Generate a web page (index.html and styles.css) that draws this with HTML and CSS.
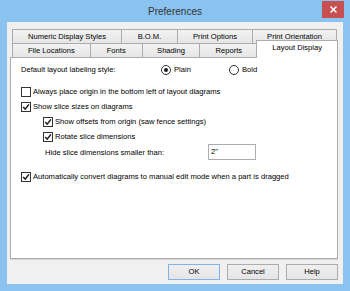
FILE: index.html
```html
<!DOCTYPE html>
<html>
<head>
<meta charset="utf-8">
<link rel="stylesheet" href="styles.css">
</head>
<body>
<div class="window">
  <div class="titlebar">
    <div class="title">Preferences</div>
    <div class="close"><svg width="7" height="7" viewBox="0 0 7 7"><path d="M0.5 0.5 L6.5 6.5 M6.5 0.5 L0.5 6.5" stroke="#fff" stroke-width="1.5"/></svg></div>
  </div>
  <div class="client">
    <div class="tabs">
      <div class="tabrow back">
        <div class="tab w-numeric">Numeric Display Styles</div>
        <div class="tab w-bom">B.O.M.</div>
        <div class="tab w-print">Print Options</div>
        <div class="tab w-orient">Print Orientation</div>
      </div>
      <div class="tabrow front">
        <div class="tab w-file">File Locations</div>
        <div class="tab w-fonts">Fonts</div>
        <div class="tab w-shading">Shading</div>
        <div class="tab w-reports">Reports</div>
        <div class="tab selected">Layout Display</div>
      </div>
    </div>
    <div class="panel">
      <div class="row">
        <span class="label-default">Default layout labeling style:</span>
        <span class="radio-opt plain"><span class="radio checked"></span>Plain</span>
        <span class="radio-opt"><span class="radio"></span>Bold</span>
      </div>
      <div class="row gap-after-default"><span class="cb"></span>Always place origin in the bottom left of layout diagrams</div>
      <div class="row"><span class="cb"><svg width="8" height="8" viewBox="0 0 8 8"><path d="M1.2 4 L3.2 6.2 L6.9 1.4" fill="none" stroke="#1a1a1a" stroke-width="1.5"/></svg></span>Show slice sizes on diagrams</div>
      <div class="row indent"><span class="cb"><svg width="8" height="8" viewBox="0 0 8 8"><path d="M1.2 4 L3.2 6.2 L6.9 1.4" fill="none" stroke="#1a1a1a" stroke-width="1.5"/></svg></span>Show offsets from origin (saw fence settings)</div>
      <div class="row indent"><span class="cb"><svg width="8" height="8" viewBox="0 0 8 8"><path d="M1.2 4 L3.2 6.2 L6.9 1.4" fill="none" stroke="#1a1a1a" stroke-width="1.5"/></svg></span>Rotate slice dimensions</div>
      <div class="row hide-row"><span class="label-hide">Hide slice dimensions smaller than:</span><span class="textbox">2"</span></div>
      <div class="row gap-before-auto"><span class="cb"><svg width="8" height="8" viewBox="0 0 8 8"><path d="M1.2 4 L3.2 6.2 L6.9 1.4" fill="none" stroke="#1a1a1a" stroke-width="1.5"/></svg></span>Automatically convert diagrams to manual edit mode when a part is dragged</div>
    </div>
    <div class="footer">
      <div class="btn default">OK</div>
      <div class="btn">Cancel</div>
      <div class="btn">Help</div>
    </div>
  </div>
</div>
</body>
</html>
```
FILE: styles.css
```css
html, body {
  margin: 0;
  padding: 0;
}
body {
  width: 350px;
  height: 291px;
  overflow: hidden;
  background: #8ac3f0;
  font-family: "Liberation Sans", Arial, sans-serif;
  font-size: 7.6px;
  color: #000;
}
.window {
  box-sizing: border-box;
  height: 291px;
  padding: 0 7px 7px;
  display: flex;
  flex-direction: column;
}
.titlebar {
  height: 22px;
  display: grid;
  grid-template-columns: 1fr auto 1fr;
  align-items: start;
}
.title {
  grid-column: 2;
  font-size: 10px;
  line-height: 23px;
  color: #333;
}
.close {
  grid-column: 3;
  justify-self: end;
  width: 22px;
  height: 17px;
  margin-top: 1px;
  margin-right: -1px;
  background: #c75050;
  display: flex;
  align-items: center;
  justify-content: center;
}
.close svg { display: block; }
.client {
  flex: 1;
  background: #f0f0f0;
  display: flex;
  flex-direction: column;
  padding: 7px 5px 4px 3px;
  min-height: 0;
}
.tabs {
  height: 28px;
  margin-left: 2px;
}
.tabrow {
  display: flex;
}
.tabrow.back {
  height: 15px;
}
.tabrow.front {
  height: 14px;
  margin-top: -1px;
}
.tab {
  box-sizing: border-box;
  border: 1px solid #acacac;
  background: linear-gradient(#f2f2f2, #e6e6e6);
  text-align: center;
  line-height: 13px;
  color: #000;
  white-space: nowrap;
}
.tab + .tab { margin-left: -1px; }
.front .tab {
  border-bottom: none;
  line-height: 14px;
}
.w-numeric { width: 110px; }
.w-bom { width: 57px; }
.w-print { width: 76px; }
.w-orient { width: 85px; }
.w-file { width: 79px; }
.w-fonts { width: 53px; }
.w-shading { width: 59px; }
.w-reports { width: 59px; }
.front .tab.selected {
  position: relative;
  z-index: 1;
  width: 82px;
  height: 18px;
  margin-top: -3px;
  margin-left: -2px;
  background: #fff;
  line-height: 14px;
}
.panel {
  flex: 1;
  background: #fff;
  border: 1px solid #adadad;
  box-shadow: 0 1px 0 #d6d6d6;
  padding: 4px 0 0 10px;
  display: flex;
  flex-direction: column;
}
.row {
  display: flex;
  align-items: center;
  height: 15px;
  white-space: nowrap;
}
.gap-after-default { margin-top: 7px; }
.gap-before-auto { margin-top: 9px; }
.indent { margin-left: 22px; }
.label-default { width: 140px; }
.radio-opt {
  display: flex;
  align-items: center;
}
.radio-opt.plain { width: 68px; }
.radio {
  box-sizing: border-box;
  width: 10px;
  height: 10px;
  border: 1px solid #333;
  border-radius: 50%;
  background: #fff;
  margin-right: 3px;
  display: flex;
  align-items: center;
  justify-content: center;
}
.radio.checked::after {
  content: "";
  width: 4px;
  height: 4px;
  border-radius: 50%;
  background: #1a1a1a;
}
.cb {
  box-sizing: border-box;
  width: 10px;
  height: 10px;
  border: 1px solid #333;
  background: #fff;
  margin-right: 2px;
  display: flex;
  align-items: center;
  justify-content: center;
}
.cb svg { display: block; }
.hide-row {
  height: 16px;
  margin-left: 24px;
}
.label-hide { width: 163px; }
.textbox {
  box-sizing: border-box;
  width: 48px;
  height: 16px;
  border: 1px solid #abadb3;
  background: #fff;
  padding-left: 2px;
  line-height: 13px;
}
.footer {
  display: flex;
  justify-content: flex-end;
  gap: 7px;
  margin-top: 5px;
}
.btn {
  box-sizing: border-box;
  width: 52px;
  height: 16px;
  border: 1px solid #acacac;
  background: linear-gradient(#f0f0f0, #e5e5e5);
  text-align: center;
  line-height: 14px;
}
.btn.default {
  border-color: #7eb4ea;
}
```
